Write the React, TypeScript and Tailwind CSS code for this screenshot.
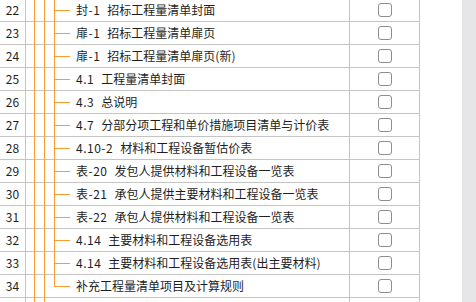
import React from "react";

type Row = { no: number; title: string; last?: boolean };

const rows: Row[] = [
  { no: 22, title: "封-1 招标工程量清单封面" },
  { no: 23, title: "扉-1 招标工程量清单扉页" },
  { no: 24, title: "扉-1 招标工程量清单扉页(新)" },
  { no: 25, title: "4.1 工程量清单封面" },
  { no: 26, title: "4.3 总说明" },
  { no: 27, title: "4.7 分部分项工程和单价措施项目清单与计价表" },
  { no: 28, title: "4.10-2 材料和工程设备暂估价表" },
  { no: 29, title: "表-20 发包人提供材料和工程设备一览表" },
  { no: 30, title: "表-21 承包人提供主要材料和工程设备一览表" },
  { no: 31, title: "表-22 承包人提供材料和工程设备一览表" },
  { no: 32, title: "4.14 主要材料和工程设备选用表" },
  { no: 33, title: "4.14 主要材料和工程设备选用表(出主要材料)" },
  { no: 34, title: "补充工程量清单项目及计算规则", last: true },
];

const ORANGE = "#fb9b32";

// tree connectors for one 23px row
function Tree({ branch, last }: { branch: boolean; last?: boolean }) {
  return (
    <svg width="50" height="23" className="shrink-0" shapeRendering="crispEdges">
      <line x1="8.5" y1="0" x2="8.5" y2="23" stroke={ORANGE} strokeWidth="1" />
      <line x1="18.5" y1="0" x2="18.5" y2="23" stroke={ORANGE} strokeWidth="1" />
      {branch && (
        <>
          <line x1="28.5" y1="0" x2="28.5" y2={last ? 12 : 23} stroke={ORANGE} strokeWidth="1" />
          <line x1="28" y1="11.5" x2="44" y2="11.5" stroke={ORANGE} strokeWidth="1" />
        </>
      )}
    </svg>
  );
}

function Checkbox() {
  return <div className="w-[14px] h-[14px] rounded-[3px] border border-[#8e8e8e] bg-white" />;
}

function Title({ text }: { text: string }) {
  const i = text.indexOf(" ");
  if (i < 0) return <span>{text}</span>;
  return (
    <>
      <span className="tracking-[0.5px]">{text.slice(0, i)}</span>
      <span className="ml-[7px]">{text.slice(i + 1)}</span>
    </>
  );
}

export default function App() {
  return (
    <div
      className="w-[476px] h-[302px] overflow-hidden bg-white flex text-[12px] text-[#1e1e1e]"
      style={{ fontFamily: '"Noto Sans CJK SC", "Noto Sans", sans-serif' }}
    >
      <div className="w-[420px] -mt-px">
        {rows.map((r) => (
          <div key={r.no} className="flex h-[23px] shadow-[inset_0_-1px_0_#c4c4c4]">
            <div className="w-[26px] shrink-0 border-r border-[#c4c4c4] flex items-center justify-center pb-px">
              {r.no}
            </div>
            <div className="w-[324px] shrink-0 border-r border-[#c4c4c4] flex">
              <Tree branch last={r.last} />
              <div className="flex items-center pb-px whitespace-nowrap">
                <Title text={r.title} />
              </div>
            </div>
            <div className="w-[70px] shrink-0 border-r border-[#c4c4c4] flex items-center justify-center pb-px">
              <Checkbox />
            </div>
          </div>
        ))}
        <div className="flex h-[23px]">
          <div className="w-[26px] shrink-0 border-r border-[#c4c4c4]" />
          <div className="w-[324px] shrink-0 border-r border-[#c4c4c4] flex">
            <Tree branch={false} />
          </div>
          <div className="w-[70px] shrink-0 border-r border-[#c4c4c4]" />
        </div>
      </div>
      <div className="flex-1" />
      <div className="w-[14px] bg-[#e6e6e8]" />
    </div>
  );
}
